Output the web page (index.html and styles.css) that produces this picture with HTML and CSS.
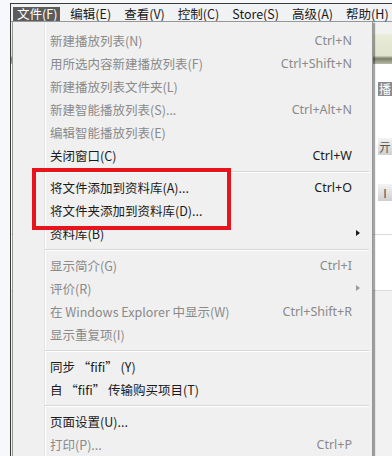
FILE: index.html
```html
<!DOCTYPE html>
<html lang="zh-CN">
<head>
  <meta charset="UTF-8">
  <title>iTunes 文件菜单</title>
  <link rel="stylesheet" href="styles.css">
</head>
<body>

  <div class="window">
    <div class="menubar">
      <span class="top-item active">文件(F)</span>
      <span class="top-item">编辑(E)</span>
      <span class="top-item">查看(V)</span>
      <span class="top-item">控制(C)</span>
      <span class="top-item">Store(S)</span>
      <span class="top-item">高级(A)</span>
      <span class="top-item">帮助(H)</span>
    </div>

    <div class="content">
      <div class="band-top"></div>
      <div class="band-dark"></div>
      <div class="white-row s17"></div>
      <div class="btn-row"><span class="mini-btn">播</span></div>
      <div class="white-row s42"></div>
      <div class="btn-row"><span class="mini-btn light">亓</span></div>
      <div class="white-row s30"></div>
      <div class="btn-row"><span class="mini-btn light">Ⅰ</span></div>
      <div class="white-row s33 lined"></div>
      <div class="white-row s55 lined"></div>
      <div class="rest"></div>
    </div>

    <div class="dropdown">
      <div class="item disabled"><span>新建播放列表(N)</span><span class="key">Ctrl+N</span></div>
      <div class="item disabled"><span>用所选内容新建播放列表(F)</span><span class="key">Ctrl+Shift+N</span></div>
      <div class="item disabled"><span>新建播放列表文件夹(L)</span></div>
      <div class="item disabled"><span>新建智能播放列表(S)...</span><span class="key">Ctrl+Alt+N</span></div>
      <div class="item disabled"><span>编辑智能播放列表(E)</span></div>
      <div class="item"><span>关闭窗口(C)</span><span class="key">Ctrl+W</span></div>
      <div class="sep"></div>
      <div class="item"><span>将文件添加到资料库(A)...</span><span class="key">Ctrl+O</span></div>
      <div class="item"><span>将文件夹添加到资料库(D)...</span></div>
      <div class="item"><span>资料库(B)</span><span class="arrow"></span></div>
      <div class="sep"></div>
      <div class="item disabled"><span>显示简介(G)</span><span class="key">Ctrl+I</span></div>
      <div class="item disabled"><span>评价(R)</span><span class="arrow"></span></div>
      <div class="item disabled"><span>在 Windows Explorer 中显示(W)</span><span class="key">Ctrl+Shift+R</span></div>
      <div class="item disabled"><span>显示重复项(I)</span></div>
      <div class="sep"></div>
      <div class="item"><span>同步 “fifi” (Y)</span></div>
      <div class="item"><span>自 “fifi” 传输购买项目(T)</span></div>
      <div class="sep"></div>
      <div class="item"><span>页面设置(U)...</span></div>
      <div class="item disabled"><span>打印(P)...</span><span class="key">Ctrl+P</span></div>
    </div>
  </div>

  <div class="highlight-box"></div>

</body>
</html>
```

FILE: styles.css
```css
body {
  margin: 0;
  width: 392px;
  height: 456px;
  overflow: hidden;
  background: #f6f8fb;
  font-family: "Noto Sans CJK SC", "Noto Sans", sans-serif;
  font-size: 12.5px;
  position: relative;
}

.window {
  position: absolute;
  left: 10px;
  top: 3px;
  right: 0;
  bottom: 0;
  overflow: hidden;
  border-left: 1px solid #3a3a3a;
  border-top: 1px solid #3a3a3a;
  background: #f4f4f4;
}

.menubar {
  height: 17px;
  display: flex;
  align-items: flex-end;
  padding-left: 2px;
  background: #f1f2f4;
  border-bottom: 1px solid #9a9a9a;
}

.top-item {
  height: 14px;
  line-height: 13px;
  padding: 0 5px;
  margin-right: 3px;
  color: #1a1a1a;
  white-space: nowrap;
}

.top-item.active {
  background: #5c5c5c;
  color: #fff;
  padding: 0 3px 0 4px;
  margin-right: 5px;
  width: 43px;
}

.content {
  display: flex;
  flex-direction: column;
  height: 434px;
}

.band-top {
  height: 12px;
  background: #f2f3f1;
}

.band-dark {
  height: 30px;
  background: linear-gradient(#e9edd9, #dfe2cc 72%, #7c806c 82%, #b8bba8);
}

.btn-row {
  height: 16px;
  display: flex;
  justify-content: flex-end;
  align-items: center;
  background: #ffffff;
}

.mini-btn {
  width: 14px;
  height: 14px;
  background: #8b8b8b;
  color: #fff;
  font-size: 12px;
  line-height: 14px;
  text-align: center;
}

.mini-btn.light {
  height: 18px;
  line-height: 18px;
  background: linear-gradient(#f4f4f4, #cdcdcd);
  color: #555;
}

.white-row {
  background: #ffffff;
}

.white-row.lined {
  border-bottom: 1px solid #dcdcdc;
}

.s17 { height: 17px; }
.s30 { height: 30px; }
.s33 { height: 33px; }
.s42 { height: 42px; }
.s55 { height: 55px; }

.rest {
  flex: 1;
  background: #f2f2f2;
}

/* drop-down list that sits over the window */
.dropdown {
  position: absolute;
  left: 1px;
  top: 17px;
  width: 361px;
  height: 445px;
  overflow: hidden;
  padding-top: 7px;
  box-sizing: border-box;
  background: linear-gradient(to right, #f0f0f0 31px, #e2e3e3 31px, #e2e3e3 32px, #ffffff 32px, #ffffff 33px, #f0f0f0 33px);
  border: 1px solid #979797;
  border-bottom: none;
  box-shadow: 2px 2px 1px rgba(0, 0, 0, 0.35);
}

.item {
  height: 23px;
  display: flex;
  align-items: center;
  justify-content: space-between;
  padding: 0 20px 0 37px;
  color: #1b1b1b;
  position: relative;
  white-space: nowrap;
}

.item.disabled {
  color: #8a8a8a;
}

.key {
  font-family: "Noto Sans", sans-serif;
  font-size: 12.5px;
}

.arrow {
  position: absolute;
  right: 12px;
  top: 8px;
  width: 0;
  height: 0;
  border-top: 3.5px solid transparent;
  border-bottom: 3.5px solid transparent;
  border-left: 4px solid #1b1b1b;
}

.item.disabled .arrow {
  border-left-color: #9a9a9a;
}

.sep {
  height: 9px;
  margin-left: 32px;
  margin-right: 3px;
  background: linear-gradient(transparent 4px, #d7d7d7 4px, #d7d7d7 5px, #ffffff 5px, #ffffff 6px, transparent 6px);
}

.highlight-box {
  position: absolute;
  left: 32px;
  top: 168px;
  width: 191px;
  height: 54px;
  border: 4px solid #e8141c;
}
```
